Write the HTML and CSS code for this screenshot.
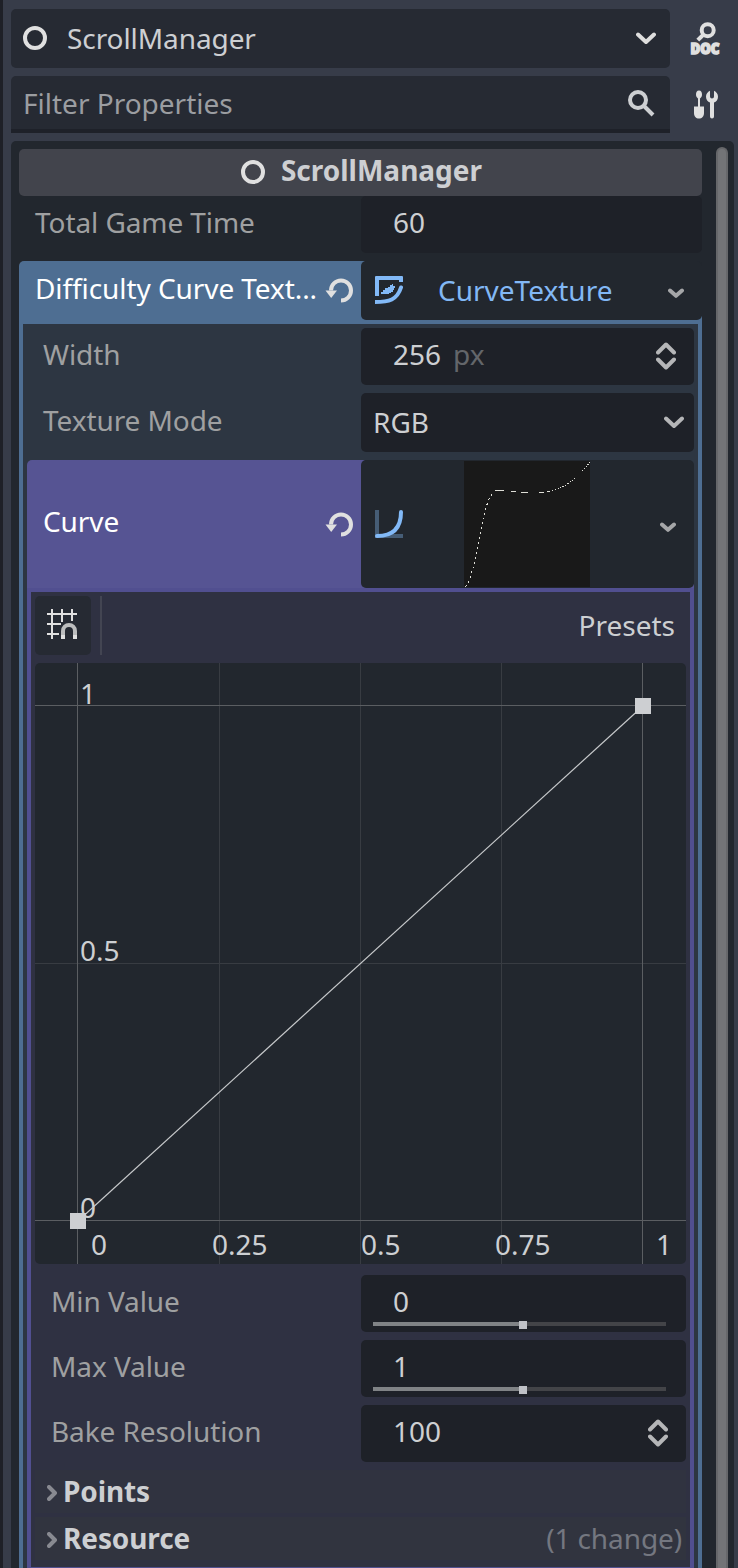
FILE: index.html
```html
<!DOCTYPE html>
<html lang="en">
<head>
<meta charset="utf-8">
<title>Inspector</title>
<link rel="stylesheet" href="styles.css">
</head>
<body>
<div class="dock">
  <header class="toolbar">
    <div class="object-select">
      <svg class="ring" width="24" height="24"><circle cx="12" cy="12" r="10"/></svg>
      <span class="object-name">ScrollManager</span>
      <svg class="chevron bright" width="20" height="13"><path d="M2 2.500 10 10 18 2.500"/></svg>
    </div>
    <svg class="tool-icon" width="32" height="38" viewBox="0 0 32 38">
      <circle class="line" cx="18.700" cy="10.200" r="6"/><path class="line" d="M14 15 8.800 20.200"/>
      <text class="doc-text" x="1.500" y="33.500" textLength="29" lengthAdjust="spacingAndGlyphs">DOC</text>
    </svg>
    <div class="filter">
      <span>Filter Properties</span>
      <svg class="search" width="28" height="28"><circle cx="11" cy="11" r="8"/><path d="M17 17 26 26"/></svg>
    </div>
    <svg class="tool-icon" width="32" height="32" viewBox="0 0 32 32">
      <path class="solid" d="M10 1.500C7.800 1.500 7 3.500 7 5.700 7 7.500 8 8.700 9 9.500V17.500H5V24C5 27.500 7 29.500 10 29.500S15 27.500 15 24V17.500H11V9.500C12 8.700 13 7.500 13 5.700 13 3.500 12.200 1.500 10 1.500Z"/>
      <path class="solid" d="M21 1.800C18.500 3 17 5.100 17 7.700 17 10.500 18.800 12.700 21 13.500V27.500Q21 29.500 23 29.500T25 27.500V13.500C27.400 12.700 29 10.500 29 7.700 29 5.100 27.500 3 25 1.800V7.500Q25 9.500 23 9.500T21 7.500Z"/>
    </svg>
  </header>

  <main class="inspector">
    <div class="properties">
      <div class="category"><svg class="ring" width="24" height="24"><circle cx="12" cy="12" r="10"/></svg><span>ScrollManager</span></div>

      <div class="row">
        <div class="label">Total Game Time</div>
        <div class="field number">60</div>
      </div>

      <div class="row resource-row blue">
        <div class="label"><span>Difficulty Curve Text...</span><svg class="revert" width="28" height="26"><path class="arc" d="M6 12.500A10 10 0 1 1 16 22.500"/><path class="head" d="M.5 12.500H12L6.200 20Z"/></svg></div>
        <div class="field resource">
          <svg class="type-icon" width="28" height="28" viewBox="0 0 28 28">
            <path class="fill-blue" d="M1 0H27Q28 0 28 1V6H24V4H4V20H0V1Q0 0 1 0Z"/>
            <path class="stroke-blue" d="M0 26C14 26 22 24 26 11.500"/>
            <path class="fill-blue" d="M6 18V16H8V14H10V12H13V11H15V9H17V8H18V10H20V12H19V14H18V16H16V17H14V18Z"/>
          </svg>
          <span class="resource-name">CurveTexture</span>
          <svg class="chevron small" width="16" height="10"><path d="M2 2.500 8 7.800 14 2.500"/></svg>
        </div>
      </div>

      <section class="sub blue-sub">
        <div class="row">
          <div class="label">Width</div>
          <div class="field number"><span>256</span><span class="unit">px</span>
            <svg class="chevron spin" width="20" height="28"><path d="M2 10.500 10 2.500 18 10.500M2 17.500 10 25.500 18 17.500"/></svg></div>
        </div>
        <div class="row option-row">
          <div class="label">Texture Mode</div>
          <div class="field option"><span>RGB</span>
            <svg class="chevron" width="20" height="13"><path d="M2 2.500 10 10 18 2.500"/></svg></div>
        </div>
        <div class="row resource-row purple">
          <div class="label"><span>Curve</span><svg class="revert" width="28" height="26"><path class="arc" d="M6 12.500A10 10 0 1 1 16 22.500"/><path class="head" d="M.5 12.500H12L6.200 20Z"/></svg></div>
          <div class="field resource">
            <svg width="28" height="28" viewBox="0 0 28 28">
              <path class="axis" d="M0 0H4V24H28V28H0Z"/>
              <path class="stroke-blue" d="M2 26C18 26 26 18 26 2"/>
            </svg>
            <svg class="thumb" width="126" height="126" viewBox="0 0 126 126">
              <path d="M31 29.500H40M47 30.500H52M57 31.500H64M75 31.500H80M83 30.500H86"/>
              <path class="steep" d="M1.500 126C5 121 7 114 9 107S14 83 17 68 23 40 28 33"/>
              <path class="dots" d="M88 30Q102 26 112 16M118 10 126 1.500"/>
            </svg>
            <svg class="chevron small" width="16" height="10"><path d="M2 2.500 8 7.800 14 2.500"/></svg>
          </div>
        </div>

        <section class="sub purple-sub">
          <div class="curve-bar">
            <div class="snap"><svg width="32" height="32" viewBox="0 0 32 32">
              <path class="grid-line" d="M6 1V31M16 1V14M26 1V13M1 6H31M1 16H15M1 26H13"/>
              <path class="magnet" d="M17 27V23A6 6 0 0 1 29 23V27"/>
              <path class="magnet tip" d="M17 27V31M29 27V31"/>
            </svg></div>
            <div class="divider"></div>
            <div class="presets">Presets</div>
          </div>

          <svg class="graph" width="651" height="601" viewBox="0 0 651 601">
            <path class="minor" d="M184.500 0V601M325.500 0V601M466.500 0V601M0 300.500H651"/>
            <path class="major" d="M42.500 0V601M607.500 0V601M0 42.500H651M0 557.500H651"/>
            <g class="ticks">
              <text x="45" y="41">1</text><text x="45" y="298">0.5</text><text x="45" y="555">0</text>
              <text x="56" y="592">0</text><text x="177" y="592">0.25</text><text x="326" y="592">0.5</text><text x="460" y="592">0.75</text><text x="621" y="592">1</text>
            </g>
            <path class="curve" d="M43 558 608 43"/>
            <rect class="point" x="35" y="550" width="16" height="16"/><rect class="point" x="600" y="35" width="16" height="16"/>
          </svg>

          <div class="row">
            <div class="label">Min Value</div>
            <div class="field number slider"><span>0</span><div class="track"><div class="filled"></div><div class="grabber"></div></div></div>
          </div>
          <div class="row">
            <div class="label">Max Value</div>
            <div class="field number slider"><span>1</span><div class="track"><div class="filled"></div><div class="grabber"></div></div></div>
          </div>
          <div class="row">
            <div class="label">Bake Resolution</div>
            <div class="field number"><span>100</span>
              <svg class="chevron spin" width="20" height="28"><path d="M2 10.500 10 2.500 18 10.500M2 17.500 10 25.500 18 17.500"/></svg></div>
          </div>
          <div class="fold"><svg class="chevron fold-arrow" width="10" height="16"><path d="M2 2 8 8 2 14"/></svg><span>Points</span></div>
          <div class="fold last"><svg class="chevron fold-arrow" width="10" height="16"><path d="M2 2 8 8 2 14"/></svg><span>Resource</span><span class="changes">(1 change)</span></div>
        </section>
      </section>
    </div>
    <div class="scrollbar"></div>
  </main>
</div>
</body>
</html>
```

FILE: styles.css
```css
* { box-sizing: border-box; }
body {
  margin: 0;
  background: #373c49;
  color: #cdcfd2;
  font: 28px/38px "Noto Sans", sans-serif;
}
svg { display: block; flex: none; fill: none; }
.dock {
  height: 1568px;
  overflow: hidden;
  border-left: 3px solid #1e2027;
  padding: 9px 4px 0 8px;
}

/* Object selector and filter */
.toolbar {
  display: grid;
  grid-template-columns: 659px 32px;
  grid-template-rows: 59px 57px;
  gap: 8px 19px;
  align-items: center;
}
.object-select, .filter {
  display: flex;
  align-items: center;
  height: 100%;
  background: #262a33;
  border-radius: 5px;
}
.object-select { padding: 0 14px 1px 12px; }
.object-name { flex: 1; margin-left: 20px; padding-bottom: 1px; letter-spacing: -.08px; }
.filter {
  justify-content: space-between;
  padding: 0 15px 0 12px;
  border-bottom: 4px solid #1e2129;
  border-radius: 5px 5px 0 0;
  color: #9b9da1;
}
.ring { stroke: #e0e0e0; stroke-width: 4; }
.search { stroke: #cdcfd2; stroke-width: 4; }
.tool-icon .line { stroke: #e0e0e0; stroke-width: 4; }
.tool-icon .solid { fill: #e0e0e0; }
.doc-text { font: 900 15px/20px "Noto Sans", sans-serif; fill: #e0e0e0; stroke: #e0e0e0; stroke-width: 1.600; }
.chevron { stroke: #b5b6b8; stroke-width: 4; stroke-linecap: round; stroke-linejoin: round; }
.chevron.bright { stroke: #dedede; }
.chevron.small { stroke: #a5a6a8; }

/* Property list */
.inspector {
  display: flex;
  justify-content: space-between;
  height: 1440px;
  margin-top: 8px;
  padding: 8px 6px 0 8px;
  background: #22272e;
  border-radius: 5px 5px 0 0;
}
.properties { width: 683px; }
.category {
  display: flex;
  align-items: center;
  justify-content: center;
  gap: 16px;
  height: 47px;
  padding: 0 0 1px 2px;
  background: #42444c;
  border-radius: 5px;
  font-weight: bold;
}
.category span { padding-bottom: 4px; }
.row { display: flex; height: 57px; margin-bottom: 8px; }
.label {
  display: flex;
  flex: none;
  align-items: center;
  justify-content: space-between;
  width: 342px;
  padding: 0 8px 5px 16px;
  color: #9fa0a1;
  white-space: nowrap;
  letter-spacing: -.08px;
}
.field {
  display: flex;
  flex: 1;
  align-items: center;
  background: #1e2128;
  border-radius: 5px;
}
.number { padding: 0 18px 5px 32px; }
.unit { margin-left: 12px; color: #63666a; }
.spin { margin: 4px 0 0 auto; }
.option-row { height: 59px; }
.option { justify-content: space-between; padding: 0 10px 0 12px; }
.option span { padding-bottom: 2px; }

.resource-row { margin-bottom: 0; border-radius: 5px 0 0 0; }
.resource-row .label { color: #fff; }
.blue { height: 59px; background: linear-gradient(to right, #4e6e92 346px, transparent 0), linear-gradient(to top, #4e6e92 4px, transparent 0); }
.purple { height: 128px; background: linear-gradient(to right, #565493 338px, transparent 0), linear-gradient(to top, #565493 4px, transparent 0); }
.purple .label { padding-bottom: 6px; }
.revert { margin-top: 5px; }
.purple .revert { margin-top: 7px; }
.revert .arc { stroke: #e0e0e0; stroke-width: 4; }
.revert .head { fill: #e0e0e0; }
.resource { background: #22272e; justify-content: space-between; padding: 0 18px 0 14px; }
.type-icon { margin-bottom: 2px; }
.resource-name { flex: 1; margin-left: 35px; padding-bottom: 2px; color: #82b8f5; }
.resource .small { margin-top: 5px; }
.fill-blue { fill: #82b9f7; }
.stroke-blue { stroke: #82b9f7; stroke-width: 4; stroke-linecap: round; }
.axis { fill: #465d76; }
.thumb { margin: 0 auto 0 61px; background: #191919; stroke: #deded7; shape-rendering: crispEdges; }
.steep { stroke-dasharray: 2 3; }
.dots { stroke-dasharray: 1.400 1.400; }

/* Nested resource editors */
.sub { border: 4px solid; border-bottom: 0; padding: 4px 4px 0; }
.blue-sub { border-color: #4e6e92; background: #2d3642; height: 1250px; }
.blue-sub > .row > .label { width: 334px; }
.purple-sub { height: 983px; border: 4px solid #514f90; background: #2f3142; }
.purple-sub > .row > .label { width: 326px; }
.curve-bar { display: flex; height: 59px; margin-bottom: 8px; }
.snap { display: flex; align-items: center; justify-content: center; width: 56px; padding: 0 2px 3px 0; background: #262a33; border-radius: 5px; }
.grid-line { stroke: #e0e0e0; stroke-width: 2; }
.magnet { stroke: #bcbdbe; stroke-width: 4; }
.magnet.tip { stroke: #e0e0e0; }
.divider { width: 2px; margin-left: 9px; background: #434552; }
.presets { margin: 10px 11px 0 auto; }
.graph { margin-bottom: 11px; background: #22272e; border-radius: 5px; }
.minor { stroke: #383c42; }
.major { stroke: #5b5e62; }
.ticks { fill: #cdcfd2; }
.curve { stroke: #c8cacc; stroke-width: 1.200; }
.point { fill: #cdcfd2; }
.slider { position: relative; }
.track { position: absolute; left: 12px; right: 20px; bottom: 6px; height: 4px; background: #434448; }
.filled { width: 149px; height: 4px; background: #808386; }
.grabber { position: absolute; left: 146px; top: -1px; width: 8px; height: 8px; background: #bfc1c6; }
.fold { display: flex; align-items: center; height: 43px; margin-bottom: 4px; padding: 2px 4px 0 12px; background: #303340; font-weight: bold; letter-spacing: -.1px; }
.fold span { margin: 0 0 4px 6px; }
.fold .changes { margin-left: auto; color: #747780; font-weight: normal; }
.fold.last { background: #31343f; }
.fold-arrow { stroke: #888a91; }
.scrollbar { width: 12px; margin-top: -2px; background: #737477; border: 2px solid #66676a; border-bottom: 0; border-radius: 6px 6px 0 0; }
```
